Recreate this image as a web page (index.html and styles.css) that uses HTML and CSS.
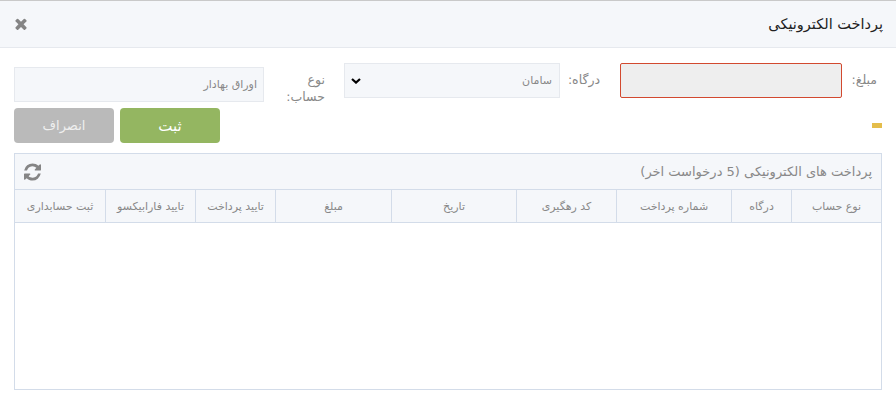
FILE: index.html
```html
<!DOCTYPE html>
<html lang="fa" dir="rtl">
<head>
<meta charset="utf-8">
<title>پرداخت الکترونیکی</title>
<link rel="stylesheet" href="styles.css">
</head>
<body>
<div class="modal">
  <header class="modal-head">
    <h1 class="modal-title">پرداخت الکترونیکی</h1>
    <button class="close" type="button" aria-label="close">
      <svg viewBox="0 0 1408 1792" width="14" height="17"><path d="M1298 1242q0 40-28 68l-136 136q-28 28-68 28t-68-28l-294-294-294 294q-28 28-68 28t-68-28l-136-136q-28-28-28-68t28-68l294-294-294-294q-28-28-28-68t28-68l136-136q28-28 68-28t68 28l294 294 294-294q28-28 68-28t68 28l136 136q28 28 28 68t-28 68l-294 294 294 294q28 28 28 68z"/></svg>
    </button>
  </header>
  <main class="modal-body">
    <form class="form-row">
      <label class="lbl lbl-amount">مبلغ:</label>
      <input class="field field-amount" type="text">
      <label class="lbl lbl-gate">درگاه:</label>
      <select class="field field-gate"><option>سامان</option></select>
      <label class="lbl lbl-type">نوع حساب:</label>
      <input class="field field-type" type="text" value="اوراق بهادار">
    </form>
    <div class="action-row">
      <span class="marker"></span>
      <div class="actions">
        <button class="btn btn-save" type="button">ثبت</button>
        <button class="btn btn-cancel" type="button">انصراف</button>
      </div>
    </div>
    <section class="panel">
      <div class="panel-head">
        <span class="panel-title">پرداخت های الکترونیکی (5 درخواست اخر)</span>
        <svg class="refresh" viewBox="0 0 1536 1792" width="17" height="20"><path d="M1511 1056q0 5-1 7-64 268-268 434.5t-478 166.5q-146 0-282.5-55t-243.5-157l-129 129q-19 19-45 19t-45-19-19-45v-448q0-26 19-45t45-19h448q26 0 45 19t19 45-19 45l-137 137q71 66 161 102t187 36q134 0 250-65t186-179q11-17 53-117 8-23 30-23h192q13 0 22.5 9.5t9.5 22.5zm25-800v448q0 26-19 45t-45 19h-448q-26 0-45-19t-19-45 19-45l138-138q-148-137-349-137-134 0-250 65t-186 179q-11 17-53 117-8 23-30 23h-199q-13 0-22.5-9.5t-9.5-22.5v-7q65-268 270-434.5t480-166.5q146 0 284 55.5t245 156.5l130-129q19-19 45-19t45 19 19 45z"/></svg>
      </div>
      <div class="grid-head">
        <div class="th">نوع حساب</div>
        <div class="th">درگاه</div>
        <div class="th">شماره پرداخت</div>
        <div class="th">کد رهگیری</div>
        <div class="th">تاریخ</div>
        <div class="th">مبلغ</div>
        <div class="th">تایید پرداخت</div>
        <div class="th">تایید فارابیکسو</div>
        <div class="th">ثبت حسابداری</div>
      </div>
      <div class="grid-body"></div>
    </section>
  </main>
</div>
</body>
</html>
```
FILE: styles.css
```css
* { box-sizing: border-box; }
html, body { margin: 0; padding: 0; background: #fff; }
body {
  width: 896px;
  height: 400px;
  overflow: hidden;
  font-family: "DejaVu Sans", sans-serif;
  font-size: 11px;
  color: #888;
}
.modal-head {
  height: 48px;
  background: #f5f7fa;
  border-top: 1px solid #c9c9c9;
  border-bottom: 1px solid #e6e9ee;
  display: flex;
  align-items: center;
  justify-content: space-between;
  padding: 0 13px 0 14px;
}
.modal-title {
  margin: 0;
  font-size: 14.5px;
  font-weight: normal;
  color: #222;
}
.close {
  border: 0;
  background: none;
  padding: 0;
  display: flex;
  fill: #858585;
}
.modal-body { padding: 15px 14px 0; }
.form-row { display: flex; align-items: flex-start; height: 39px; }
.lbl { font-size: 12.5px; color: #888; line-height: 17px; flex: none; }
.lbl-amount { width: 40px; padding: 8px 5px 0 0; }
.lbl-gate { width: 60px; padding: 8px 20px 0 0; }
.lbl-type { width: 80px; padding: 8px 19px 0 20px; }
.field {
  flex: none;
  height: 35px;
  border: 1px solid #e6e9ee;
  background-color: #f5f7fa;
  color: #888;
  font-family: inherit;
  font-size: 11px;
  border-radius: 0;
  padding: 0 6px;
  outline: none;
}
.field-amount {
  width: 222px;
  background-color: #eeeeee;
  border-color: #d2492f;
  border-radius: 2px;
}
.field-gate {
  width: 216px;
  padding-right: 7px;
  appearance: none;
  background-image: url("data:image/svg+xml,%3Csvg xmlns='http://www.w3.org/2000/svg' width='10' height='6'%3E%3Cpath d='M1 1l4 3.6L9 1' fill='none' stroke='%23000' stroke-width='2.2'/%3E%3C/svg%3E");
  background-repeat: no-repeat;
  background-position: 6px 14px;
}
.field-type { width: 250px; margin-top: 4px; }
.action-row {
  display: flex;
  align-items: center;
  justify-content: space-between;
  margin-top: 6px;
}
.marker { width: 10px; height: 5px; background: #e4bd4b; }
.actions { display: flex; gap: 6px; }
.btn {
  width: 100px;
  height: 35px;
  border: 0;
  border-radius: 4px;
  color: #fff;
  font-family: inherit;
  font-size: 13px;
  padding: 0;
}
.btn-save { background: #94b661; font-size: 15px; }
.btn-cancel { background: #bababa; color: #efefef; }
.panel {
  margin-top: 10px;
  height: 237px;
  border: 1px solid #d3dce9;
  display: flex;
  flex-direction: column;
}
.panel-head {
  height: 35px;
  background: #f5f7fa;
  display: flex;
  align-items: center;
  justify-content: space-between;
  padding: 0 9px;
  font-size: 13px;
  color: #888;
}
.refresh { fill: #858585; }
.grid-head {
  height: 34px;
  display: grid;
  grid-template-columns: 90px 60px 115px 100px 125px 116px 80px 90px 1fr;
  background: #f5f7fa;
  border-top: 1px solid #d3dce9;
  border-bottom: 1px solid #d3dce9;
}
.th {
  display: flex;
  align-items: center;
  justify-content: center;
  font-size: 11px;
  color: #888;
  border-left: 1px solid #d3dce9;
}
.th:last-child { border-left: 0; }
.grid-body { flex: 1; background: #fff; }
```
